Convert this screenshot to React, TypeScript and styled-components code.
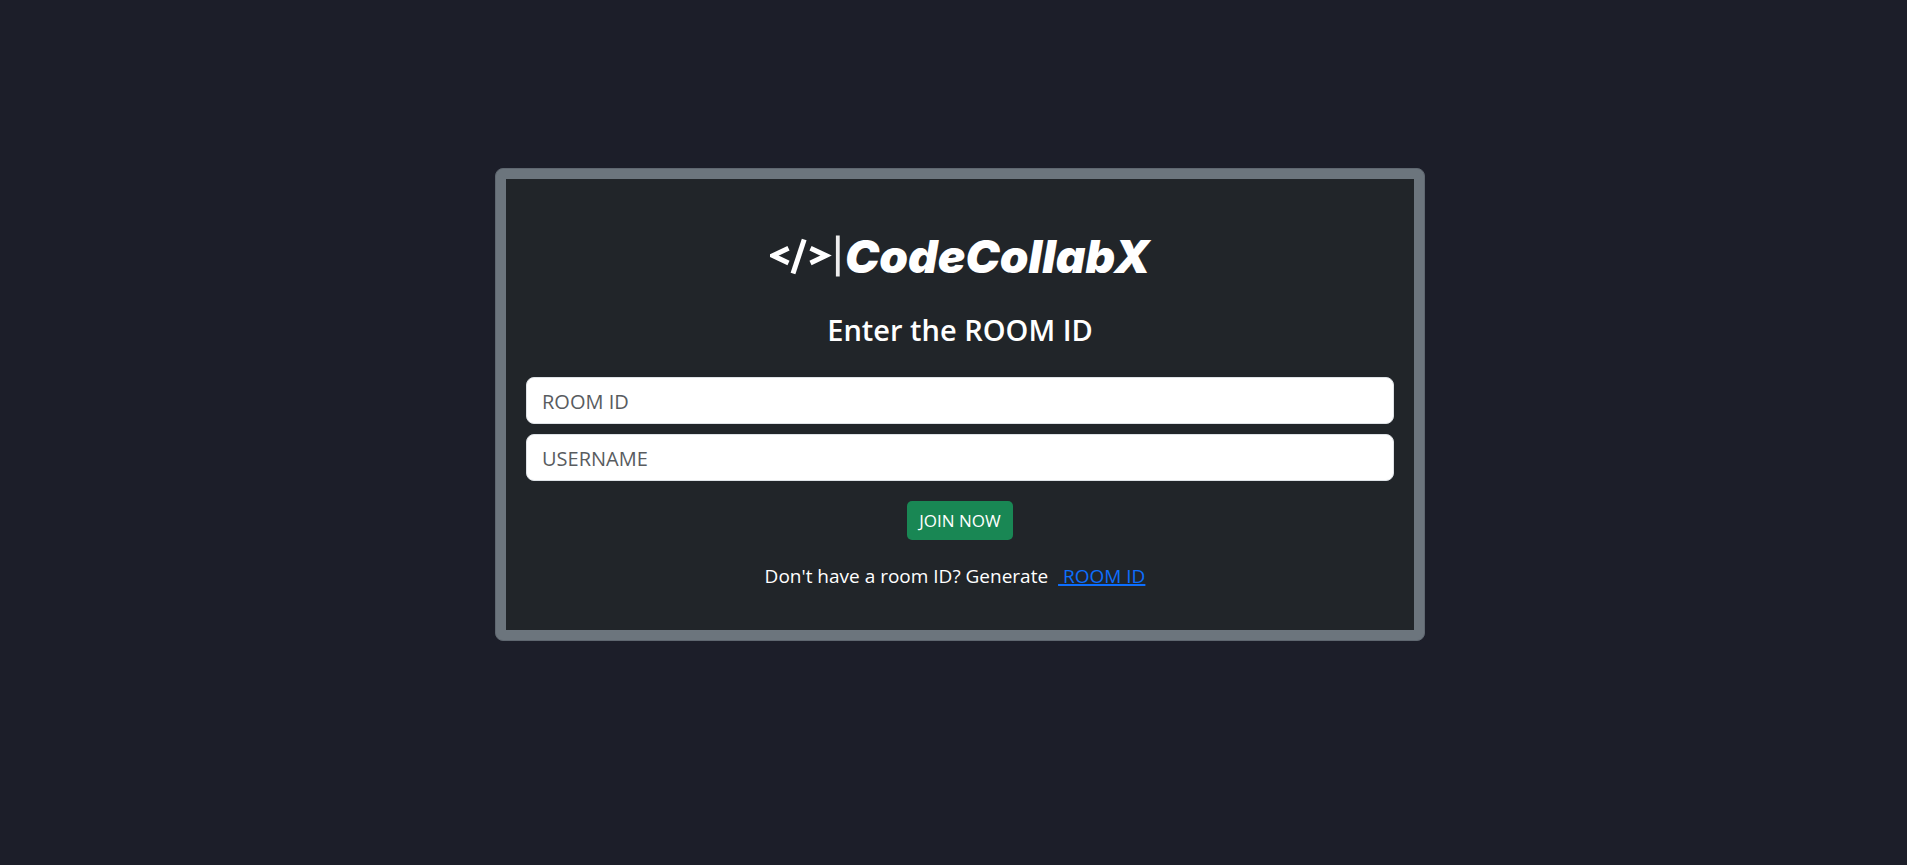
import React from "react";
import styled, { createGlobalStyle } from "styled-components";

const GlobalStyle = createGlobalStyle`
  *, *::before, *::after { box-sizing: border-box; }
  body {
    margin: 0;
    background: #1c1e29;
    color: #fff;
    font-family: "Segoe UI", "Open Sans", sans-serif;
    font-size: 19px;
    line-height: 30px;
  }
`;

const Page = styled.main`
  display: flex;
  justify-content: center;
  align-items: flex-start;
  min-height: 100vh;
  padding: 168px 0 56px 13px;
`;

const Card = styled.section`
  width: 100%;
  max-width: 930px;
  padding: 10px;
  border: 1px solid #5f6770;
  border-radius: 8px;
  background: #6c757d;
`;

const CardBody = styled.form`
  display: flex;
  flex-direction: column;
  align-items: center;
  padding: 49px 20px 39px;
  background: #212529;
`;

const Logo = styled.div`
  display: flex;
  align-items: center;
  height: 56px;
  white-space: nowrap;
`;

const LogoMark = styled.svg`
  flex: none;
  margin-right: 4px;
`;

const BrandName = styled.span`
  font: italic 900 46px/56px Inter, "Open Sans", sans-serif;
`;

const Title = styled.h1`
  margin: 29px 0 30px;
  font-size: 29px;
  font-weight: 600;
  line-height: 34px;
`;

const Field = styled.input`
  width: 100%;
  height: 47px;
  margin-bottom: 10px;
  padding: 9px 15px 8px;
  border: 1px solid #dee2e6;
  border-radius: 8px;
  background: #fff;
  color: #212529;
  font: inherit;
  font-size: 20px;

  &::placeholder { color: #595c5f; opacity: 1; }
`;

const JoinButton = styled.button`
  height: 39px;
  margin: 10px 0 21px;
  padding: 0 12px;
  border: 0;
  border-radius: 5px;
  background: #198754;
  color: #fff;
  font: inherit;
  font-size: 17px;
  cursor: pointer;
`;

const Note = styled.p`
  margin: 0;
  padding-right: 10px;
  white-space: nowrap;
`;

const RoomLink = styled.a`
  margin-left: 5px;
  color: #0d6efd;
  text-decoration: underline;
  text-decoration-thickness: 2px;
`;

export default function App() {
  return (
    <>
      <GlobalStyle />
      <Page>
        <Card>
          <CardBody onSubmit={(e: React.FormEvent) => e.preventDefault()}>
            <Logo>
              <LogoMark width="71" height="42" viewBox="0 0 71 42" aria-hidden="true">
                <g fill="none" stroke="#fff" strokeWidth="5">
                  <path d="M18.5 13.2 3 20.6 18.5 28" />
                  <path d="M34.2 4.5 23 38.5" />
                  <path d="M40.5 13.2 56 20.6 40.5 28" />
                </g>
                <path d="M67.8 .5V41.5" stroke="#eee" strokeWidth="3.8" />
              </LogoMark>
              <BrandName>CodeCollabX</BrandName>
            </Logo>
            <Title>Enter the ROOM ID</Title>
            <Field type="text" placeholder="ROOM ID" aria-label="Room ID" />
            <Field type="text" placeholder="USERNAME" aria-label="Username" />
            <JoinButton type="submit">JOIN NOW</JoinButton>
            <Note>
              Don't have a room ID? Generate{" "}
              <RoomLink href="#">&nbsp;ROOM ID</RoomLink>
            </Note>
          </CardBody>
        </Card>
      </Page>
    </>
  );
}
